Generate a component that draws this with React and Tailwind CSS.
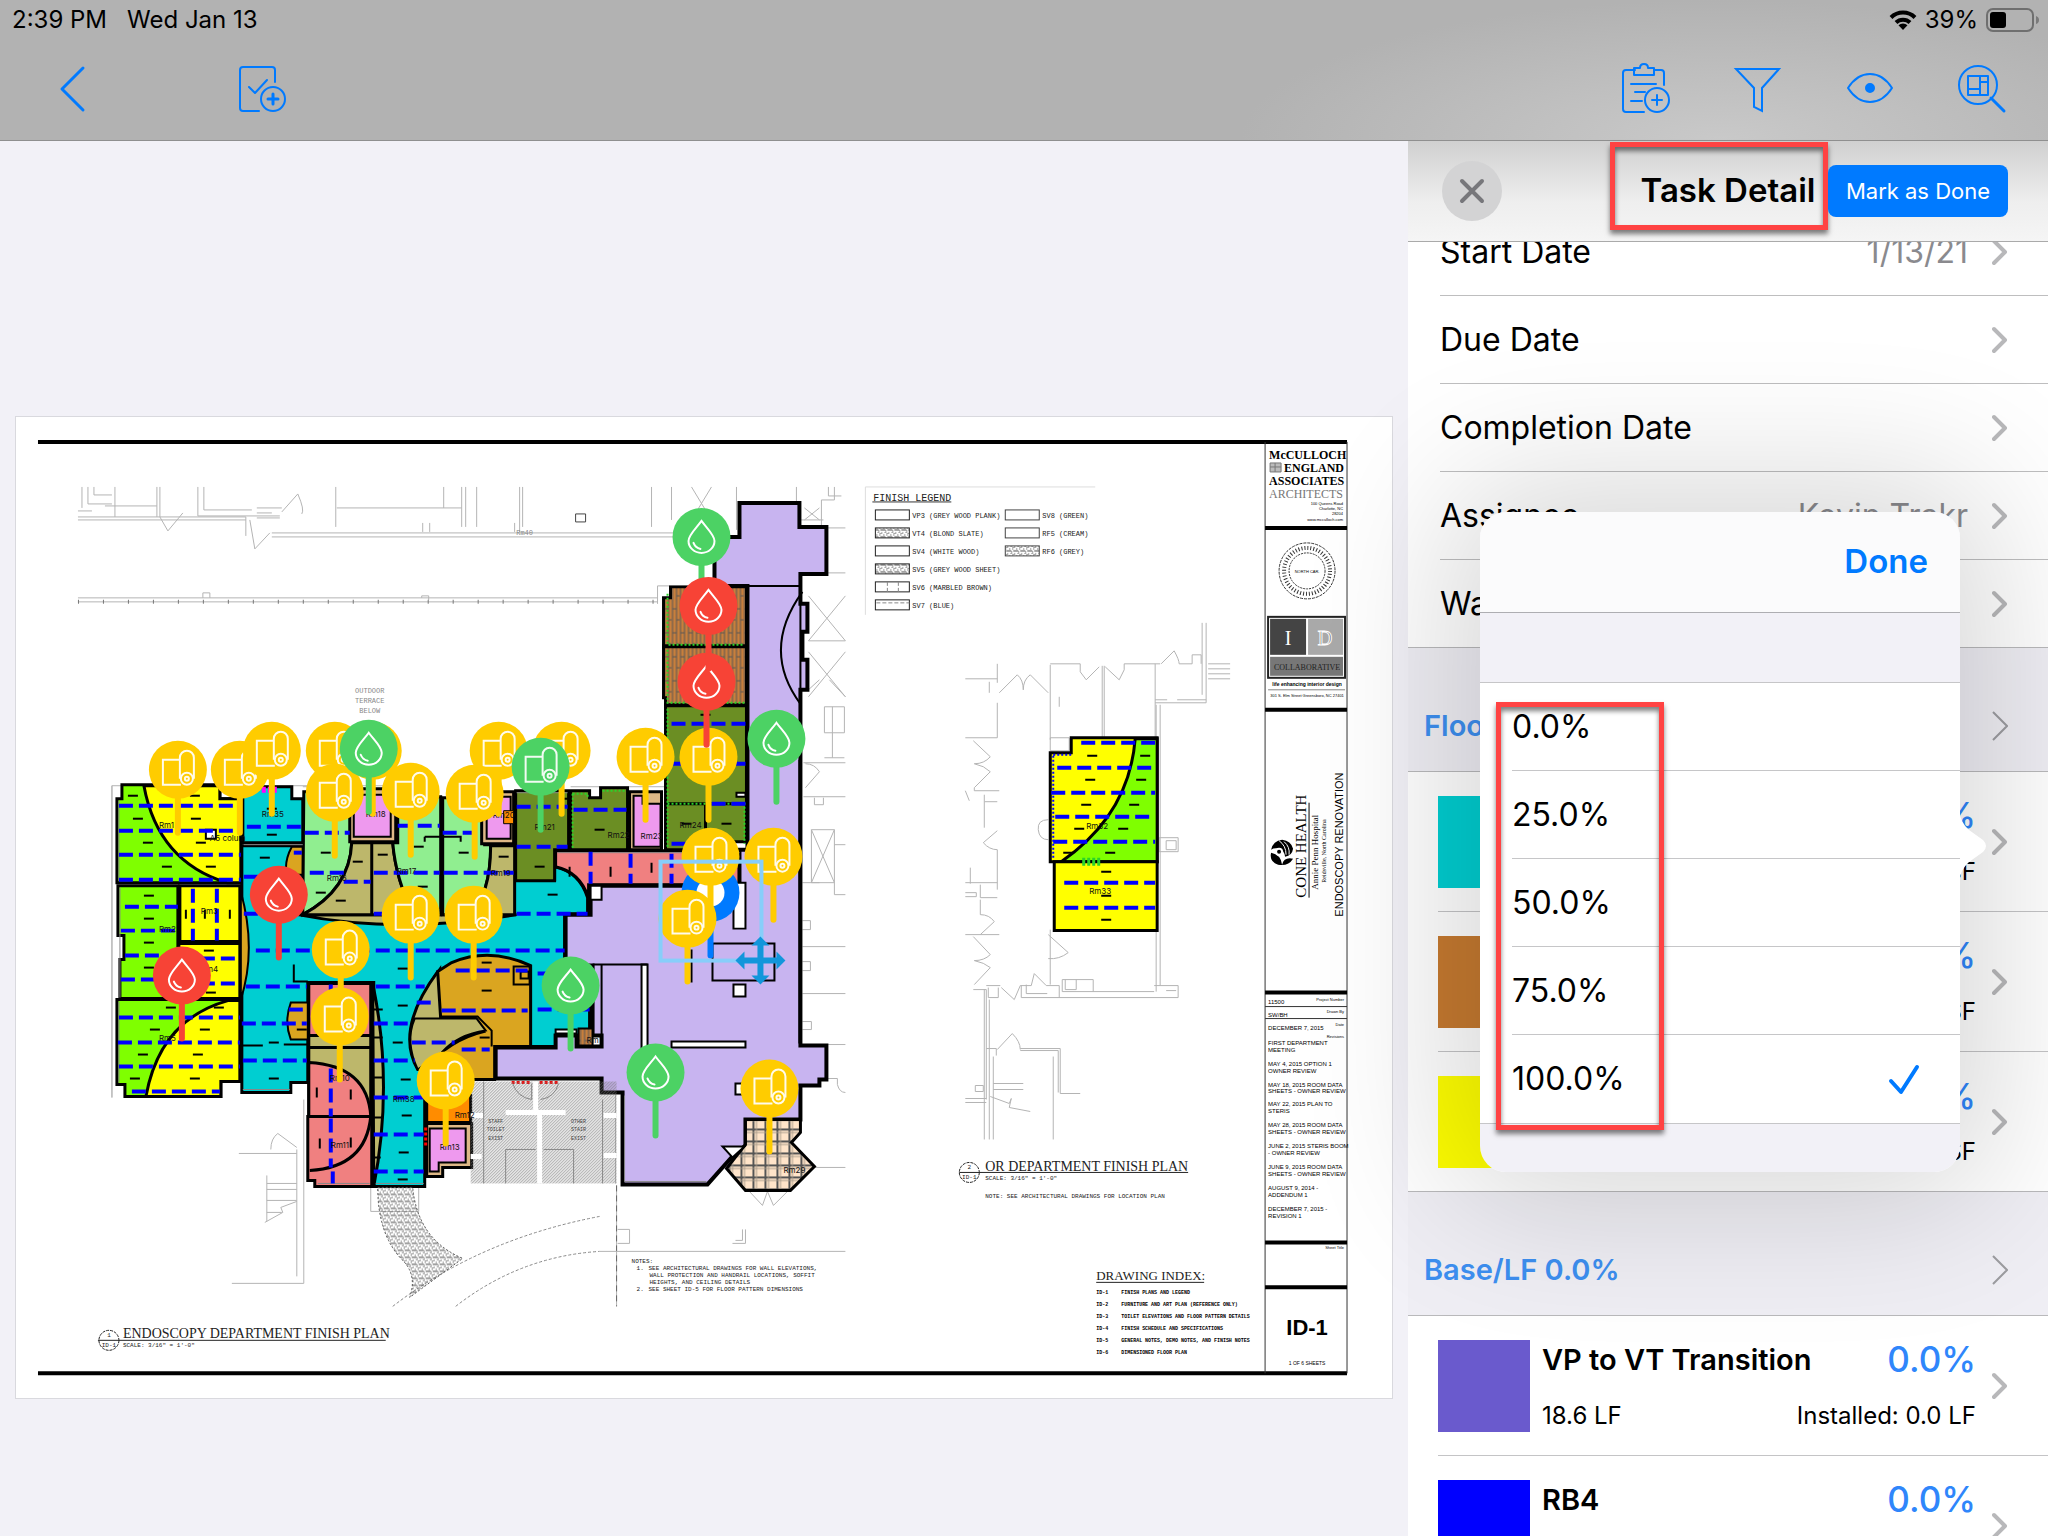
import React from "react";

const ink = { fill: "none", stroke: "#000", strokeWidth: 3 };

function Chevron({ thin }) {
  return thin ? (
    <svg className="h-8 w-4 shrink-0" viewBox="0 0 16 32" fill="none" stroke="#9c9ca0" strokeWidth="2">
      <path d="M1 2l14 14L1 30" />
    </svg>
  ) : (
    <svg className="h-8 w-4 shrink-0" viewBox="0 0 16 32" fill="none" stroke="#b8b8ba" strokeWidth="4">
      <path d="M2 5l11 11L2 27" strokeLinecap="round" strokeLinejoin="round" />
    </svg>
  );
}

function StatusBar() {
  return (
    <div className="flex h-10 items-center justify-between pr-2 pl-3 text-[24px] leading-10 text-black">
      <div className="flex gap-5">
        <span>2:39 PM</span>
        <span>Wed Jan 13</span>
      </div>
      <div className="flex items-center gap-2">
        <svg className="h-5 w-7" viewBox="0 0 28 20" fill="none" stroke="#000" strokeWidth="4">
          <path d="M2 7.500a17 17 0 0 1 24 0" />
          <path d="M7 12.500a10 10 0 0 1 14 0" />
          <path d="M14 20l-4.500-4.700a6.500 6.500 0 0 1 9 0z" fill="#000" stroke="none" />
        </svg>
        <span>39%</span>
        <svg className="h-6 w-[54px]" viewBox="0 0 54 24" fill="none">
          <rect x="1" y="1" width="46" height="22" rx="6" stroke="#6f6f6f" strokeWidth="2" />
          <rect x="4" y="4" width="16" height="16" rx="3" fill="#000" />
          <path d="M50 8v8q3-1 3-4t-3-4" fill="#7a7a7a" />
        </svg>
      </div>
    </div>
  );
}

function IconButton({ label, children }) {
  return (
    <button aria-label={label} className="flex h-14 w-14 items-center justify-center">
      <svg className="h-14 w-14" viewBox="0 0 56 56" fill="none" stroke="#007aff" strokeWidth="2" strokeLinecap="round" strokeLinejoin="round">
        {children}
      </svg>
    </button>
  );
}

function NavBar() {
  return (
    <header className="relative z-10 h-[141px] shrink-0 border-b border-[#8f8f8f] bg-[#b2b2b2] bg-[radial-gradient(ellipse_480px_140px_at_84%_100%,#c9c9c9,#b2b2b2)]">
      <StatusBar />
      <div className="flex items-center justify-between pt-5 pr-[38px] pl-11">
        <div className="flex gap-[134px]">
          <IconButton label="Back">
            <path d="M39 8L18 29l21 21" strokeWidth="3" />
          </IconButton>
          <IconButton label="Add task">
            <path d="M41 22V10q0-3-3-3H9q-3 0-3 3v38q0 3 3 3h16" />
            <path d="M15 27l6 6 12-13" />
            <circle cx="39" cy="39" r="12" />
            <path d="M39 34v10M34 39h10" strokeWidth="3" />
          </IconButton>
        </div>
        <div className="flex gap-14">
          <IconButton label="Add report">
            <path d="M17 10H8q-3 0-3 3v36q0 3 3 3h18M36 10h7q3 0 3 3v12" />
            <path d="M16 8h6q0-4 4-4t4 4h6v7H16z" />
            <path d="M13 24h25M17 32h10M13 41h11" />
            <circle cx="39" cy="40" r="12" />
            <path d="M39 35v10M34 40h10" />
          </IconButton>
          <IconButton label="Filter">
            <path d="M6 9h43L32 28v23l-8-4V28z" strokeLinejoin="miter" />
          </IconButton>
          <IconButton label="Visibility">
            <path d="M6 28q9-14 22-14t22 14q-9 14-22 14T6 28z" />
            <circle cx="28" cy="28" r="4" fill="#007aff" />
          </IconButton>
          <IconButton label="Find on plan">
            <circle cx="24" cy="25" r="19" />
            <path d="M37 38l13 13" strokeWidth="3" />
            <path d="M14 16h20v19H14zM26 16v19M14 29h12M26 22h8" />
          </IconButton>
        </div>
      </div>
    </header>
  );
}

function DetailRow({ label, value, last }) {
  return (
    <button className="flex h-[88px] w-full shrink-0 items-center text-left">
      <span className={"ml-8 flex h-full flex-1 items-center justify-between pr-10 text-[32px] " + (last ? "" : "border-b border-[#bebebf]")}>
        <span>{label}</span>
        <span className="flex items-center gap-6">
          <span className="text-[#8a8a8e]">{value}</span>
          <Chevron />
        </span>
      </span>
    </button>
  );
}

function SectionHeader({ title }) {
  return (
    <button className="-mt-px flex h-[125px] w-full shrink-0 items-center justify-between border-y border-[#b9b9bb] bg-[#efeef4] pt-14 pr-10 pb-6 pl-4 text-left">
      <span className="text-[29px] font-semibold text-[#3d8ff0]">{title}</span>
      <Chevron thin />
    </button>
  );
}

function MaterialRow({ color, name, percent, quantity, installed, last }) {
  return (
    <button className="flex h-[140px] w-full shrink-0 pl-[30px] text-left">
      <span className={"flex h-full min-w-0 flex-1 items-center pr-10 " + (last ? "" : "border-b border-[#c4c4c6]")}>
        <span className={"mr-3 block h-[92px] w-[92px] shrink-0 " + color} />
        <span className="mr-4 flex flex-1 flex-col gap-5">
          <span className="flex h-10 items-center justify-between">
            <span className="text-[29px] font-semibold">{name}</span>
            <span className="text-[35px] font-medium text-[#2f86fb]">{percent}</span>
          </span>
          <span className="flex h-8 items-center justify-between text-[24px]">
            <span>{quantity}</span>
            <span>{installed}</span>
          </span>
        </span>
        <Chevron />
      </span>
    </button>
  );
}

const options = ["0.0%", "25.0%", "50.0%", "75.0%", "100.0%"];

function PercentPopover() {
  return (
    <div role="dialog" aria-label="Percent complete" className="absolute top-[371px] left-[72px] h-[660px] w-[480px] rounded-[26px] shadow-[0_0_150px_30px_rgba(0,0,0,0.16)]">
      <svg className="absolute top-[298px] left-[479px] h-[72px] w-7" viewBox="0 0 28 72">
        <path d="M0 0Q1 12 10 20L24 30Q30 36 24 42L10 52Q1 60 0 72z" fill="#fff" />
      </svg>
      <div className="relative flex h-full flex-col overflow-hidden rounded-[26px] bg-[#f2f1f7]">
        <div className="flex h-[101px] shrink-0 items-center justify-end border-b border-[#aeaeb2] bg-[#fbfbfc] px-8">
          <button className="text-[33px] font-semibold text-[#007aff]">Done</button>
        </div>
        <div className="h-[70px] shrink-0 border-b border-[#c6c6c8]" />
        <ul className="border-b border-[#c6c6c8] bg-white">
          {options.map((o, i) => (
            <li key={o} className="pl-8">
              <button className={"flex h-[88px] w-full items-center justify-between pr-10 text-[32px] " + (i < 4 ? "border-b border-[#c6c6c8]" : "")}>
                <span>{o}</span>
                {i === 4 && (
                  <svg className="h-8 w-8" viewBox="0 0 32 32" fill="none" stroke="#007aff" strokeWidth="4" strokeLinecap="round" strokeLinejoin="round">
                    <path d="M3 18l10 11L29 4" />
                  </svg>
                )}
              </button>
            </li>
          ))}
        </ul>
      </div>
      <div className="pointer-events-none absolute top-[190px] left-4 h-[428px] w-[168px] border-[5px] border-[#ff4343] shadow-[0_4px_5px_rgba(0,0,0,0.5),inset_0_4px_5px_rgba(0,0,0,0.5)]" />
    </div>
  );
}

function TaskPanel() {
  return (
    <aside className="relative flex w-[640px] shrink-0 flex-col bg-white">
      <div className="relative z-10 flex h-[101px] shrink-0 items-center justify-between border-b border-[#aaa] bg-[linear-gradient(#d0d0d0,#eeeeee_60%,#f5f5f5)] pr-10 pl-[34px]">
        <button aria-label="Close" className="flex h-[60px] w-[60px] items-center justify-center rounded-full bg-[#d3d3d4]">
          <svg className="h-7 w-7" viewBox="0 0 28 28" stroke="#77777b" strokeWidth="4" strokeLinecap="round">
            <path d="M4 4l20 20M24 4L4 24" />
          </svg>
        </button>
        <h1 className="absolute inset-x-0 text-center text-[33px] font-semibold">Task Detail</h1>
        <div className="pointer-events-none absolute top-px left-[202px] h-[88px] w-[218px] border-[5px] border-[#ff4343] shadow-[0_4px_5px_rgba(0,0,0,0.5),inset_0_4px_5px_rgba(0,0,0,0.5)]" />
        <button className="relative h-[52px] w-[180px] rounded-lg bg-[#007aff] text-[22px] text-white">Mark as Done</button>
      </div>
      <div className="flex min-h-0 flex-1 flex-col overflow-hidden">
        <div className="-mt-[34px] flex flex-col">
          <DetailRow label="Start Date" value="1/13/21" />
          <DetailRow label="Due Date" />
          <DetailRow label="Completion Date" />
          <DetailRow label="Assignee" value="Kevin Trakr" />
          <DetailRow label="Watchers" last />
          <SectionHeader title="Floor" />
          <MaterialRow color="bg-[#00ced1]" percent="0.0%" installed="SF" />
          <MaterialRow color="bg-[#c67a30]" percent="0.0%" installed="SF" />
          <MaterialRow color="bg-[#ffff00]" percent="0.0%" installed="SF" last />
          <SectionHeader title="Base/LF 0.0%" />
          <MaterialRow color="bg-[#6a5acd]" name="VP to VT Transition" percent="0.0%" quantity="18.6 LF" installed="Installed: 0.0 LF" />
          <MaterialRow color="bg-[#0000ff]" name="RB4" percent="0.0%" />
        </div>
      </div>
      <PercentPopover />
    </aside>
  );
}

/* ---------- floor plan drawing ---------- */

const Y = "#ffcc00";
const G = "#4cd264";
const R = "#f74336";

function Pin({ x, y, c, kind }) {
  return (
    <g transform={`translate(${x} ${y})`} fill="none" stroke="#fff" strokeWidth="2">
      <path d="M0 20V63" stroke={c} strokeWidth="6" strokeLinecap="round" />
      <circle r="29" fill={c} stroke="none" />
      {kind === "roll" && (
        <g opacity="0.92">
          <path d="M2-10H-15V15H3" />
          <path d="M2 9V-12a7 7 0 0 1 14 0V9" />
          <circle cx="9" cy="9" r="6" />
          <circle cx="9" cy="9" r="2" />
        </g>
      )}
      {kind === "drop" && (
        <g>
          <path d="M0-16C5-9 13-2 13 4A13 12 0 0 1-13 4C-13-2-5-9 0-16z" />
          <path d="M-8 6q2 5 7 6" strokeLinecap="round" />
        </g>
      )}
      {kind === "ring" && <circle r="14" fill="#fff" stroke="none" />}
    </g>
  );
}

const pins = [
  [178, 770, Y, "roll"], [240, 770, Y, "roll"], [272, 751, Y, "roll"], [335, 751, Y, "roll"], [373, 751, Y, "roll"],
  [335, 793, Y, "roll"], [369, 749, G, "drop"], [411, 792, Y, "roll"], [499, 751, Y, "roll"], [562, 751, Y, "roll"],
  [475, 794, Y, "roll"], [541, 767, G, "roll"], [646, 757, Y, "roll"], [709, 757, Y, "roll"], [702, 537, G, "drop"],
  [707, 682, R, "drop"], [709, 606, R, "drop"], [777, 739, G, "drop"], [711, 893, "#007aff", "ring"], [711, 857, Y, "roll"],
  [774, 857, Y, "roll"], [688, 919, Y, "roll"], [474, 915, Y, "roll"], [411, 915, Y, "roll"], [279, 895, R, "drop"],
  [182, 976, R, "drop"], [341, 950, Y, "roll"], [340, 1017, Y, "roll"], [446, 1081, Y, "roll"], [571, 986, G, "drop"],
  [656, 1073, G, "drop"], [770, 1089, Y, "roll"],
];

/* x1, x2, y */
const dashes = [
  [119, 241, 806], [119, 241, 831], [119, 241, 855], [119, 241, 880], [125, 178, 907], [121, 178, 931], [125, 178, 956], [121, 178, 980],
  [181, 241, 959], [181, 241, 984], [119, 240, 1018], [118, 240, 1043], [119, 240, 1067], [132, 220, 1092],
  [247, 302, 827], [244, 290, 877], [294, 302, 853], [244, 300, 914], [256, 565, 951], [246, 307, 987], [376, 425, 987], [242, 307, 1024], [374, 411, 1024],
  [243, 307, 1061], [374, 415, 1061], [374, 424, 1098], [374, 424, 1135], [374, 424, 1172], [289, 307, 1010],
  [305, 350, 833], [398, 440, 826], [443, 481, 833], [310, 350, 873], [344, 371, 882], [374, 440, 873], [444, 514, 873], [374, 410, 914], [517, 588, 914],
  [456, 528, 971], [442, 528, 1011], [462, 490, 1050], [417, 434, 1003], [412, 455, 1043], [538, 590, 974], [538, 590, 1010],
  [517, 568, 807], [517, 568, 847], [574, 627, 810], [672, 746, 724], [672, 746, 764], [712, 746, 804], [672, 700, 844],
];
const verticals = [
  [193, 889, 941], [217, 889, 941], [331, 985, 1020], [331, 1069, 1117], [331, 1119, 1168], [333, 1172, 1184],
  [591, 852, 884], [631, 854, 884], [672, 854, 884],
];
const ticks = [
  [128, 796], [133, 819], [143, 843], [162, 867], [190, 796], [191, 819], [196, 843], [206, 867], [144, 896], [144, 919], [144, 943], [144, 968],
  [204, 951], [206, 993], [166, 1008], [150, 1030], [138, 1055], [130, 1079], [200, 1030], [193, 1055], [190, 1079], [214, 1008],
  [267, 809], [267, 835], [260, 858], [321, 853], [353, 862], [378, 855], [414, 847], [459, 853], [499, 857], [316, 893], [336, 901], [418, 887],
  [269, 1043], [269, 1079], [297, 1030], [398, 969], [398, 1006], [393, 1043], [401, 1080], [402, 1116], [399, 1153], [398, 1180],
  [548, 895], [535, 867], [595, 830], [682, 824], [722, 824], [482, 963], [482, 991], [480, 1038], [562, 799], [701, 715],
];
const roomLabels = [
  ["Rm1", 159, 828], ["Rm2", 159, 932], ["Rm3", 201, 914], ["Rm4", 201, 972], ["Rm5", 159, 1041], ["Rm35", 262, 817], ["A5 colum", 210, 841],
  ["Rm16", 327, 881], ["Rm17", 397, 874], ["Rm18", 366, 817], ["Rm19", 491, 876], ["Rm20", 493, 818], ["Rm21", 535, 830], ["Rm22", 608, 838],
  ["Rm23", 641, 839], ["Rm24", 680, 828], ["Rm10", 330, 1081], ["Rm11", 331, 1149], ["Rm38", 393, 1103], ["Rm12", 455, 1119], ["Rm13", 440, 1151],
  ["Rm29", 784, 1174], ["Rm", 587, 1043], ["Rm32", 1087, 829], ["Rm33", 1090, 894],
];

function LeftPlan() {
  return (
    <g>
      <g {...ink} strokeLinejoin="miter">
        <path fill="#00ced1" d="M242 846H303V880H555V867Q580 872 588 898V914H565V967H590V1047H440V970Q395 1030 425 1070V1187H374V983H308V1083H291V1093H242z" />
        <path fill="#7fff00" d="M122 785H220V799H241V883H117V799H122z" />
        <path fill="#ffff00" d="M144 786H220V799H241V883H227Q158 862 144 786z" />
        <path fill="#7fff00" d="M118 886H178V999H120V960H124V936H118z" />
        <path fill="#ffff00" d="M180 886H240V942H180zM179 944H240V999H179z" />
        <path fill="#7fff00" d="M117 1000H240V1082H221V1097H125V1085H117z" />
        <path fill="#ffff00" d="M228 1001H240V1082H221V1097H146Q160 1020 228 1001z" />
        <path fill="#00ced1" d="M243 787H292V799H303V843H243z" />
        <path fill="#daa520" strokeWidth="2" d="M241 892Q257 950 241 1000zM303 847H292Q284 862 287 875H303zM308 1003H291Q284 1022 291 1040H308z" />
        <path fill="#bdb76b" d="M298 915H517Q400 935 298 915z" />
        <path fill="#90ee90" d="M304 792H352V843Q350 890 303 915z" />
        <path fill="#bdb76b" d="M352 843H372V915H303Q350 890 352 843zM372 843H393Q396 880 414 915H372z" />
        <path fill="#90ee90" d="M398 797H441V915H414Q396 880 393 843H398z" />
        <path fill="#90ee90" d="M443 798H485V845H491Q491 895 470 915H443z" />
        <path fill="#bdb76b" d="M491 846H515V915H470Q491 895 491 846z" />
        <path fill="#deb887" d="M350 789H396V842H350zM482 792H514V844H482z" />
        <path fill="#ee99ee" strokeWidth="2" d="M354 795H391V837H354zM487 797H511V839H487z" />
        <path fill="#ff8c00" strokeWidth="1" d="M504 811H514V824H504z" />
        <path fill="#6b8e23" d="M516 791H569V850H555V881H516zM571 791H590V798H601V788H628V850H571z" />
        <path fill="#deb887" d="M630 792H662V850H630z" />
        <path fill="#ee99ee" strokeWidth="2" d="M634 796H643V804H661V847H634z" />
        <path fill="#f08080" d="M556 851H741V885H589V898Q580 872 556 867z" />
        <path fill="#6b8e23" d="M666 706H747V804H666zM666 804H706V850H666zM706 804H747V842H706z" />
        <path fill="url(#wood)" d="M671 587H747V646H664V598H671zM664 647H747V705H666V698H664z" />
        <path fill="#c8b4f0" strokeWidth="4" d="M740 503H800V527H827V574H801V604H808V632H803V660H808V690H801V1046H827V1080H820V1086H801V1120H746V1146L732 1158 708 1185H623V1093H602V1079H496V1048H556V1036H577V1047H602V1036H593V966H566V915H591V886H740V850H748V586H715V537H740z" />
        <path d="M748 586H801V705M803 592Q761 650 801 704" strokeWidth="2" />
        <path fill="#f08080" d="M309 984H371V1048H309z" />
        <path fill="#bdb76b" d="M309 1036H371V1048H309zM309 1048H371V1117H309z" />
        <path fill="#f08080" d="M309 1063Q368 1066 371 1117H309zM308 1117H372V1187H315V1181H308z" />
        <path d="M371 1117Q366 1168 310 1171" />
        <path fill="#bdb76b" d="M373 984Q394 1085 374 1187zM438 972Q395 1030 418 1070H445V972z" />
        <path fill="#daa520" d="M438 972L452 963Q490 947 531 966V1047H495V1080H424V1070Q450 1040 484 1032L476 1019H441z" />
        <path fill="#bdb76b" strokeWidth="2" d="M440 1019H477L486 1031Q458 1035 442 1053L418 1070Q405 1042 415 1019z" />
        <path strokeWidth="2" d="M440 1017H478L492 1031V1047M372 1010H383M372 1038H383M372 1078H383M372 1118H383M372 1158H381M294 965V982H308M242 1046H263M284 1045H308M514 967H530V985H514zM521 972H529V979H521z" />
        <path fill="#ff8c00" d="M427 1096H471V1123H427z" />
        <path fill="#deb887" d="M427 1124H472V1168H443V1177H427z" />
        <path fill="#ee99ee" strokeWidth="2" d="M430 1129H466V1163H439V1172H430z" />
        <path fill="url(#plaid)" d="M746 1120H801V1133L792 1143 815 1167 791 1191H746L727 1169 746 1145z" />
        <path fill="url(#wood)" strokeWidth="2" d="M579 1029H593V1046H579z" />
      </g>
      <g fill="#fff" stroke="#000" strokeWidth="3">
        <path d="M591 886H602V900H591zM734 985H746V997H734zM734 883H746V929H734zM736 1084H745V1095H736zM672 1042H746V1048H672zM642 965H648V1080H642zM737 793H746V797H737z" strokeWidth="2" />
        <path d="M723 1147H745L733 1158zM556 1030H577V1034H556zM206 830H216V839H206z" strokeWidth="2" />
      </g>
      <path d="M593 965H648M713 944H775V981H713zM602 966V1047M692 950V983M800 760V1044M748 700V842" fill="none" stroke="#000" strokeWidth="2" />
      <path d="M119 801V881M120 888V998M119 1002V1083M244 845H303M243 1090H290M318 1184H370M376 1184H424M517 793H568M558 853H740M625 1096V1182H707" fill="none" stroke="#888" strokeWidth="1" />
      <path d="M668 594V645H745M668 650V703H745M668 709V848M668 804H745V844M573 794H588V798M603 791H626M573 794V848" fill="none" stroke="#2ad42a" strokeWidth="2" strokeDasharray="2 2" />
      <path d="M512 1083H532M540 1083H559M426 1128V1147" stroke="#f00" strokeWidth="3" strokeDasharray="3 2" />
      <path d="M262 790H277" stroke="#f0f" strokeWidth="6" strokeDasharray="4 2" />
      <g stroke="#0000ff" strokeWidth="4" strokeDasharray="14 6">
        {dashes.map(([a, b, y], i) => <path key={i} d={`M${a} ${y}H${b}`} />)}
        {verticals.map(([x, a, b], i) => <path key={i} d={`M${x} ${a}V${b}`} />)}
      </g>
      <g stroke="#000" strokeWidth="2">
        {ticks.map(([x, y], i) => <path key={i} d={`M${x} ${y}h10`} />)}
        <path d="M186 910v9M205 910v9M230 910v9M317 1088v10M351 1090v10M320 1139v10M351 1138v10M570 867v10M611 867v10M652 863v10M425 837h36v5M425 837v5" fill="none" />
      </g>
      <rect x="471" y="1082" width="146" height="102" fill="url(#hatch)" />
      <path d="M536 1082V1112M506 1113H566M540 1113V1184M471 1116H484M471 1157H482M604 1116H617M604 1156H617" stroke="#fff" strokeWidth="5" />
      <path d="M506 1150H536M544 1150H574V1184M506 1150V1184M484 1082V1184M603 1100V1184M532 1084V1100Q518 1098 513 1084M541 1100Q555 1098 559 1084" fill="none" stroke="#888" strokeWidth="1" />
      <path d="M378 1188H413Q418 1240 463 1259L410 1298Q418 1275 402 1260Q378 1235 378 1188z" fill="url(#speckle)" stroke="#555" strokeWidth="1" strokeDasharray="2 2" />
    </g>
  );
}

function FaintLines() {
  return (
    <g fill="none" stroke="#b4b4b4" strokeWidth="1">
      <path d="M82 487V508M88 487V504H112M94 487V495H112M115 487V517M78 511H92M105 506H157M78 517H246M78 520H246M157 487V517M160 487V517L168 531 183 513M198 487V516H280M204 487V510H252M257 508H282M246 517V536M250 520L255 549 270 533M336 487V527M337 508H462M444 487V508M462 487V527M466 487V527M477 487V527M520 487V532M523 487V527M272 533H704M272 537H704M652 487V527M672 487V520M692 487L712 520M712 487L692 520M737 487V530M797 487V520H824M829 487V496H842M835 487V500H822V527M805 508L820 520M820 508L805 520M827 528H846M827 573H846" />
      <path d="M78 598H658M78 602H658M203 598V593H210V598M422 598V596H429V600M658 586V604M658 586H700" />
      <path d="M78 602H658" strokeDasharray="1 24" strokeWidth="4" stroke="#777" />
      <path d="M257 518H280M257 513H272M282 512L298 494Q305 510 302 514M423 523V532M430 523V532M515 523V532" />
      <path d="M576 514h10v8h-10z" stroke="#444" />
      <path d="M809 596L846 641M846 596L809 641M809 641H846M809 652L846 697M846 652L809 697M809 690L820 680M830 680L846 697M825 707H845V733H825M825 707V733M833 707V758M825 758H845M804 763H846M806 764Q815 764 820 772L806 788M804 797H846M815 798V805H824V798M812 830H835V883H812zM812 830L835 883M835 830L812 883M835 845H846M835 883V895H846M803 883H820M803 921H811V930H803M803 947H846M803 962H811V971H803M803 994H846M803 1022H812V1030H803M803 1045H846M820 1079H838V1085M838 1085Q840 1093 846 1093M800 1168H846" />
      <path d="M112 786V1098M112 786H405M112 1098V786M303 787H345M571 787H665V792M616 1095V1184M617 1186V1307" strokeWidth="1" />
      <path d="M617 1186V1307" stroke="#666" strokeDasharray="6 4" />
      <path d="M232 1284H304V1100M297 1150V1277M239 1154H297M267 1176V1222M267 1184H297M267 1190H297M267 1201H297M267 1213H282M265 1223L283 1213 281 1208 297 1202M271 1150Q271 1139 278 1134L297 1148M371 1188V1212H419V1188" />
      <path d="M393 1307Q480 1240 600 1217M456 1307Q520 1257 600 1252" strokeDasharray="3 2" stroke="#888" />
      <path d="M618 1230H630V1244H618M733 1244H746V1230M736 1241H743V1230M600 1252H846M749 1191L763 1206 768 1192 774 1206 789 1191" />
      <path d="M866 615V487H1096" stroke="#ddd" />
      <path d="M998 664V683M966 679H998M990 682V693M998 703V738H966M1000 693L1018 675Q1024 680 1024 690Q1024 680 1031 675L1049 693M1051 665V740M1051 664H1081V672L1087 680 1100 667M1103 666V737M1105 666V737M1106 667L1120 680 1125 670V664H1161M1156 664V738M1162 664L1175 651Q1180 660 1180 664H1193V655H1202V664M1203 623V695M1207 623V703H1156M1156 700H1168M1178 700H1207M1209 664H1231M1209 669H1231M1209 674H1231M1209 679H1231M1161 705V986M1157 705V738M1051 738H1070V751H1051zM1060 697V707" />
      <path d="M974 741L991 757Q985 764 975 764Q985 766 991 772L975 788V791H1000M966 791L970 801M985 795V802H998M985 802V828M998 831L984 843Q990 850 998 850V890M971 868V884M966 883H998M966 893H977V897H966M981 885V898H998M981 900V915Q990 915 995 922L981 935M966 935H1000M974 937L991 955Q985 961 975 961Q985 963 991 968L975 985M1049 820Q1038 820 1039 830Q1040 840 1049 840M1160 838H1179V852H1160zM1167 841H1177V850H1167z" />
      <path d="M1051 930V985M1049 935L1069 953Q1060 960 1049 959M974 990H987V1100M985 990V1140M990 1000V1140M987 986H1001M1002 988L1015 1000 1021 986H1032L1035 974 1047 986H1060V998M1027 985V994H1048M1022 986V998H1179V986H1155M1063 980V992H1155M1066 980V990H1077V980M1063 980H1094V992M1157 930V992M1167 991H1177M989 988V998H999V988M987 1049H997V1056M998 1050L1013 1034Q1021 1042 1021 1050M1021 1049H1061V1094H1081M1021 1051H1059V1093M994 1057V1140M1054 1057V1140M994 1084H1024M994 1090H1024M966 1099H987M966 1103H987M976 1086H984V1092H976zM991 1097L1010 1104 1012 1099 1010 1108 1031 1112" />
    </g>
  );
}

function OrPlan() {
  return (
    <g>
      <g {...ink}>
        <path fill="#ffff00" d="M1072 738H1158V862H1051V753H1072z" />
        <path fill="#7fff00" d="M1136 739H1158V862H1062Q1130 815 1136 739z" />
        <path fill="#ffff00" d="M1055 862H1158V931H1055z" />
      </g>
      <path d="M1054 756V860M1054 755H1073" stroke="#00f" strokeWidth="2" strokeDasharray="2 2" />
      <path d="M1083 862H1102" stroke="#2ad42a" strokeWidth="8" strokeDasharray="3 2" />
      <g stroke="#0000ff" strokeWidth="4" strokeDasharray="14 6">
        <path d="M1082 743H1156M1058 768H1156M1052 793H1156M1056 817H1156M1054 842H1156M1065 883H1156M1065 908H1156" />
      </g>
      <path d="M1088 756h10M1141 756h10M1086 780h10M1137 780h10M1082 805h10M1130 805h10M1075 829h10M1119 829h10M1064 853h10M1106 853h10M1102 872h10M1102 896h10M1102 920h10" stroke="#000" strokeWidth="2" />
    </g>
  );
}

const legendA = ["VP3 (GREY WOOD PLANK)", "VT4 (BLOND SLATE)", "SV4 (WHITE WOOD)", "SV5 (GREY WOOD SHEET)", "SV6 (MARBLED BROWN)", "SV7 (BLUE)"];
const legendB = ["SV8 (GREEN)", "RF5 (CREAM)", "RF6 (GREY)"];
const index = ["FINISH PLANS AND LEGEND", "FURNITURE AND ART PLAN (REFERENCE ONLY)", "TOILET ELEVATIONS AND FLOOR PATTERN DETAILS", "FINISH SCHEDULE AND SPECIFICATIONS", "GENERAL NOTES, DEMO NOTES, AND FINISH NOTES", "DIMENSIONED FLOOR PLAN"];
const fills = ["#fff", "url(#speckle)", "#fff", "url(#speckle)", "#fff", "#fff"];

function Annotations() {
  return (
    <g fill="#222" style={{ fontFamily: '"Liberation Mono", monospace' }}>
      <text x="874" y="501" fontSize="10">FINISH  LEGEND</text>
      <path d="M873 502H952" stroke="#333" />
      {legendA.map((t, i) => (
        <g key={t}>
          <rect x="876" y={510 + i * 18} width="34" height="10" fill={fills[i]} stroke="#222" />
          <text x="913" y={518 + i * 18} fontSize="7">{t}</text>
        </g>
      ))}
      <path d="M877 603H910M888 582V592M899 582V592" stroke="#888" strokeDasharray="4 2" />
      {legendB.map((t, i) => (
        <g key={t}>
          <rect x="1006" y={510 + i * 18} width="34" height="10" fill={i === 2 ? "url(#speckle)" : "#fff"} stroke="#444" />
          <text x="1043" y={518 + i * 18} fontSize="7">{t}</text>
        </g>
      ))}
      <g fill="#888" fontSize="7" textAnchor="middle">
        <text x="370" y="693">OUTDOOR</text>
        <text x="370" y="703">TERRACE</text>
        <text x="370" y="713">BELOW</text>
        <text x="525" y="535">Rm40</text>
      </g>
      <g fontSize="6">
        <text x="632" y="1264">NOTES:</text>
        <text x="637" y="1271">1.</text>
        <text x="649" y="1271">SEE ARCHITECTURAL DRAWINGS FOR WALL ELEVATIONS,</text>
        <text x="650" y="1278">WALL PROTECTION AND HANDRAIL LOCATIONS, SOFFIT</text>
        <text x="650" y="1285">HEIGHTS, AND CEILING DETAILS</text>
        <text x="637" y="1292">2.</text>
        <text x="649" y="1292">SEE SHEET ID-5 FOR FLOOR PATTERN DIMENSIONS</text>
        <text x="123" y="1348">SCALE: 3/16" = 1'-0"</text>
        <text x="986" y="1181">SCALE: 3/16" = 1'-0"</text>
        <text x="986" y="1199">NOTE: SEE ARCHITECTURAL DRAWINGS FOR LOCATION PLAN</text>
      </g>
      <g fontSize="5" textAnchor="middle" fill="#444">
        <text x="496" y="1124">STAFF</text><text x="496" y="1132">TOILET</text><text x="496" y="1141">EXIST</text>
        <text x="579" y="1124">OTHER</text><text x="579" y="1132">STAIR</text><text x="579" y="1141">EXIST</text>
      </g>
      <g style={{ fontFamily: '"Liberation Serif", serif' }}>
        <text x="123" y="1339" fontSize="14">ENDOSCOPY DEPARTMENT FINISH PLAN</text>
        <text x="986" y="1172" fontSize="14">OR DEPARTMENT FINISH PLAN</text>
        <text x="1097" y="1281" fontSize="13">DRAWING INDEX:</text>
      </g>
      <g fill="none" stroke="#222">
        <path d="M98 1341H386M960 1173H1189M1097 1283H1205" />
        <circle cx="109" cy="1341" r="10" strokeDasharray="3 1" />
        <circle cx="970" cy="1173" r="10" strokeDasharray="3 1" />
      </g>
      <g fontSize="6" textAnchor="middle">
        <text x="109" y="1338">1</text><text x="109" y="1348">ID-1</text>
        <text x="970" y="1170">2</text><text x="970" y="1180">ID-1</text>
      </g>
      {index.map((t, i) => (
        <g key={t} fontSize="5" fill="#000" fontWeight="bold">
          <text x="1097" y={1295 + i * 12}>{"ID-" + (i + 1)}</text>
          <text x="1122" y={1295 + i * 12}>{t}</text>
        </g>
      ))}
    </g>
  );
}

const revisions = [
  [1004, "11500"], [1017, "SW/BH"], [1030, "DECEMBER 7, 2015"], [1045, "FIRST DEPARTMENT"], [1052, "MEETING"], [1066, "MAY 4, 2015 OPTION 1"], [1073, "OWNER REVIEW"],
  [1087, "MAY 18, 2015 ROOM DATA"], [1094, "SHEETS - OWNER REVIEW"], [1107, "MAY 22, 2015 PLAN TO"], [1114, "STERIS"],
  [1128, "MAY 28, 2015 ROOM DATA"], [1135, "SHEETS - OWNER REVIEW"], [1149, "JUNE 2, 2015 STERIS BOOM"], [1156, "- OWNER REVIEW"],
  [1170, "JUNE 9, 2015 ROOM DATA"], [1177, "SHEETS - OWNER REVIEW"], [1191, "AUGUST 9, 2014 -"], [1198, "ADDENDUM 1"], [1212, "DECEMBER 7, 2015 -"], [1219, "REVISION 1"],
];

function TitleBlock() {
  return (
    <g style={{ fontFamily: '"Liberation Sans", sans-serif' }}>
      <path d="M38 442H1348M38 1374H1348" stroke="#000" strokeWidth="4" />
      <path d="M1266 442V1374M1348 442V1374M1266 1007H1348M1266 1019H1348" stroke="#333" strokeWidth="1" />
      <path d="M1266 528H1348M1266 710H1348M1266 993H1348M1266 1243H1348M1266 1288H1348" stroke="#000" strokeWidth="4" />
      <g style={{ fontFamily: '"Liberation Serif", serif' }} fontSize="12" fontWeight="bold">
        <text x="1270" y="459">McCULLOCH</text>
        <text x="1285" y="472">ENGLAND</text>
        <text x="1270" y="485">ASSOCIATES</text>
        <text x="1270" y="498" fill="#777" fontWeight="normal">ARCHITECTS</text>
      </g>
      <path d="M1271 463h11v9h-11zM1276 463v9M1271 467h11" fill="#bbb" stroke="#777" />
      <g fontSize="4" textAnchor="end">
        <text x="1344" y="505">100 Queens Road</text><text x="1344" y="510">Charlotte, NC</text><text x="1344" y="515">28204</text><text x="1344" y="521">www.mcculloch.com</text>
      </g>
      <g fill="none" stroke="#333">
        <circle cx="1308" cy="571" r="28" strokeDasharray="3 1" />
        <circle cx="1308" cy="571" r="23" strokeWidth="4" strokeDasharray="1 2" />
        <circle cx="1308" cy="571" r="18" strokeDasharray="2 1" />
      </g>
      <text x="1308" y="573" fontSize="4" textAnchor="middle">NORTH CAR.</text>
      <rect x="1269" y="617" width="77" height="61" fill="#fff" stroke="#222" strokeWidth="2" />
      <rect x="1271" y="619" width="36" height="36" fill="#444" />
      <rect x="1309" y="619" width="35" height="36" fill="#aaa" />
      <rect x="1271" y="657" width="73" height="19" fill="#777" />
      <g textAnchor="middle" style={{ fontFamily: '"Liberation Serif", serif' }} fontSize="20">
        <text x="1289" y="645" fill="#fff">I</text>
        <text x="1326" y="645" fill="#777" stroke="#fff" strokeWidth="1">D</text>
        <text x="1308" y="670" fontSize="8" fill="#222">COLLABORATIVE</text>
      </g>
      <text x="1308" y="686" fontSize="5" fontWeight="bold" textAnchor="middle">life enhancing interior design</text>
      <path d="M1269 690H1346" stroke="#888" />
      <text x="1308" y="697" fontSize="4" textAnchor="middle">301 S. Elm Street Greensboro, NC 27401</text>
      <g transform="translate(1283 853)">
        <path d="M-11 0Q-13 9-4 12Q6 14 11 6Q2 4 0 12Q-1 2-11 0zM-11-3Q-9-12 0-13Q9-12 11-4Q10 3 3 4Q2-3-3-4T-11-3z" />
        <circle cx="-3" cy="-1" r="4" fill="#fff" />
        <circle cx="-3" cy="-1" r="2" />
        <path d="M2-11Q8-6 7 2M-3-12Q4-7 4 2" stroke="#fff" fill="none" />
      </g>
      <g transform="rotate(-90)" style={{ fontFamily: '"Liberation Serif", serif' }}>
        <text x="-898" y="1307" fontSize="15">CONE HEALTH</text>
        <path d="M-898 1310H-803" stroke="#000" strokeWidth="1" />
        <text x="-890" y="1319" fontSize="9">Annie Penn Hospital</text>
        <text x="-883" y="1327" fontSize="6">Reidsville, North Carolina</text>
        <text x="-917" y="1344" fontSize="11" style={{ fontFamily: '"Liberation Sans", sans-serif' }}>ENDOSCOPY RENOVATION</text>
      </g>
      <g fontSize="6">
        {revisions.map(([y, t]) => <text key={y} x="1269" y={y}>{t}</text>)}
      </g>
      <g fontSize="4" textAnchor="end">
        <text x="1345" y="1001">Project Number</text><text x="1345" y="1013">Drawn By</text><text x="1345" y="1026">Date</text><text x="1345" y="1038">Revisions</text><text x="1345" y="1250">Sheet Title</text>
      </g>
      <text x="1308" y="1336" fontSize="22" fontWeight="bold" textAnchor="middle">ID-1</text>
      <text x="1308" y="1366" fontSize="5" textAnchor="middle">1  OF  6  SHEETS</text>
    </g>
  );
}

function PlanSheet() {
  return (
    <svg className="block w-full border border-[#d9d9de] bg-white" viewBox="16 417 1377 982" role="img" aria-label="Finish plan sheet ID-1">
      <defs>
        <pattern id="wood" width="8" height="24" patternUnits="userSpaceOnUse">
          <rect width="8" height="24" fill="#c87f3c" />
          <path d="M1 0V24M5 0V24M1 9H5M5 20H8" stroke="#555" strokeWidth="1" />
        </pattern>
        <pattern id="plaid" x="740" y="1122" width="12" height="12" patternUnits="userSpaceOnUse">
          <rect width="12" height="12" fill="#ffe4c9" />
          <path d="M2 0V12M0 8H12" stroke="#555" strokeWidth="2" />
          <path d="M5 0V12M0 11H12" stroke="#a89a8a" strokeWidth="1" />
        </pattern>
        <pattern id="hatch" width="3" height="3" patternUnits="userSpaceOnUse">
          <path d="M0 3L3 0" stroke="#777" strokeWidth="1" />
        </pattern>
        <pattern id="speckle" width="7" height="7" patternUnits="userSpaceOnUse">
          <path d="M0 1h1M3 0h2M2 3h1M5 3h1M0 5h2M4 6h1M6 1v1M3 4v2M6 5h1" stroke="#444" strokeWidth="1" />
        </pattern>
      </defs>
      <FaintLines />
      <LeftPlan />
      <OrPlan />
      <g fontSize="8" fill="#111" style={{ fontFamily: "Inter, sans-serif" }}>
        {roomLabels.map(([t, x, y]) => <text key={t} x={x} y={y}>{t}</text>)}
      </g>
      <Annotations />
      <TitleBlock />
      {pins.map(([x, y, c, kind], i) => <Pin key={i} x={x} y={y} c={c} kind={kind} />)}
      <rect x="661" y="862" width="101" height="99" fill="none" stroke="#87cefa" strokeWidth="4" />
      <path d="M761 937l9 9h-6v12h13v-6l9 9-9 9v-6h-13v12h6l-9 9-9-9h6v-12h-13v6l-9-9 9-9v6h13v-12h-6z" fill="#1296db" />
    </svg>
  );
}

export default function App() {
  return (
    <div className="flex h-screen flex-col overflow-hidden bg-[#f2f1f7] text-black" style={{ fontFamily: 'Inter, "Liberation Sans", sans-serif' }}>
      <NavBar />
      <div className="flex min-h-0 flex-1">
        <main className="flex min-w-0 flex-1 items-center px-[15px] pt-[138px]">
          <PlanSheet />
        </main>
        <TaskPanel />
      </div>
    </div>
  );
}
